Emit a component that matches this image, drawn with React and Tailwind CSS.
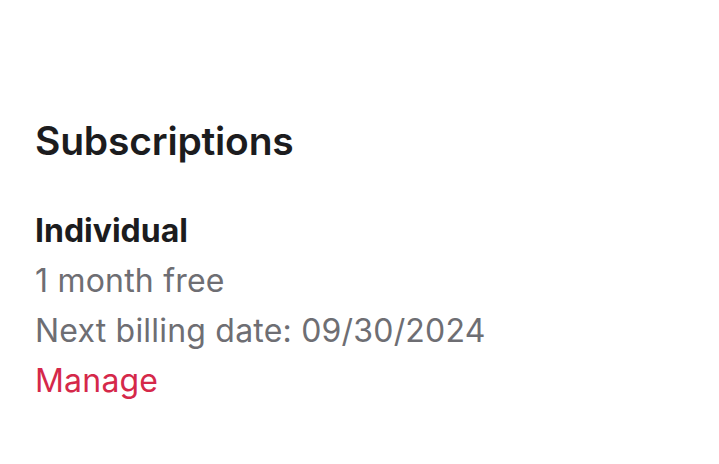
export default function App() {
  return (
    <main className="w-[719px] h-[464px] bg-white pl-[35px] pt-[116px] font-['Inter','Liberation_Sans',sans-serif]">
      <h1 className="text-[39px] leading-[50px] font-semibold text-[#1c1c1e] tracking-[-0.2px]">
        Subscriptions
      </h1>

      <section className="mt-[40px] text-[32px] leading-[50px] tracking-[0.2px]">
        <h2 className="font-bold text-[#1c1c1e] tracking-[0px]">Individual</h2>
        <p className="text-[#6e6e73]">1 month free</p>
        <p className="text-[#6e6e73]">Next billing date: 09/30/2024</p>
        <a href="#" className="block text-[#d5284a]">
          Manage
        </a>
      </section>
    </main>
  );
}
